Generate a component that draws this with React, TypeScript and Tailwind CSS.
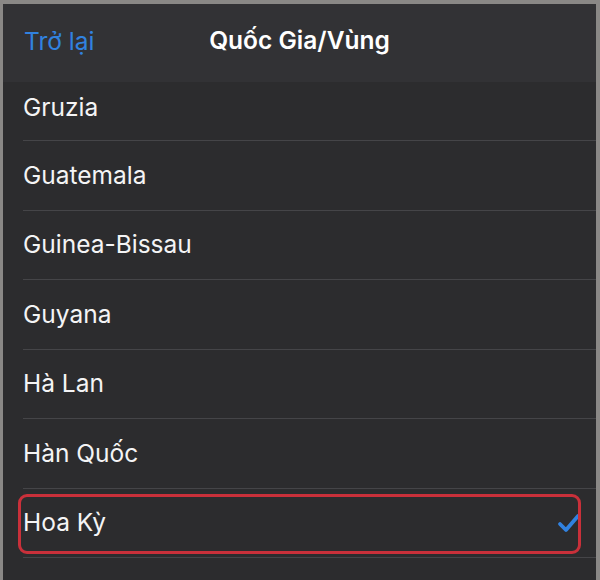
import React from "react";

const countries = ["Guatemala", "Guinea-Bissau", "Guyana", "Hà Lan", "Hàn Quốc"];

export default function App() {
  return (
    <div
      className="w-[600px] h-[580px] bg-[#8a8886] pl-[3px] pt-[4px] pr-[4px] overflow-hidden"
      style={{ fontFamily: "Inter, 'Noto Sans', sans-serif" }}
    >
      <div className="h-full bg-[#2c2c2e] flex flex-col">
        <div className="h-[78px] bg-[#323235] relative flex items-center justify-center shrink-0">
          <span className="absolute left-[21px] top-[20px] text-[24.5px] text-[#3182e0] leading-[34px]">Trở lại</span>
          <span className="text-[24.5px] font-semibold text-white leading-[34px] -mt-[6px]">Quốc Gia/Vùng</span>
        </div>
        <div className="pl-[20px]">
          <div className="h-[59px] border-b border-[#454548] flex items-center text-[24.5px] text-[#f4f4f5] pb-[8px]">Gruzia</div>
          {countries.map((c) => (
            <div key={c} className="h-[69.5px] border-b border-[#454548] flex items-center text-[24.5px] text-[#f4f4f5]">
              {c}
            </div>
          ))}
          <div className="h-[69.5px] border-b border-[#454548] flex items-center text-[24.5px] text-[#f4f4f5] relative">
            Hoa Kỳ
            <svg className="absolute left-[534px] top-[23px]" width="24" height="22" viewBox="0 0 24 22">
              <path d="M3 12 L9 18 L21 4" fill="none" stroke="#3182e0" strokeWidth="3.8" strokeLinecap="round" strokeLinejoin="round" />
            </svg>
            <div className="absolute left-[-5px] top-[5px] w-[563px] h-[60px] border-[3px] border-[#c9303a] rounded-[9px]" />
          </div>
        </div>
      </div>
    </div>
  );
}
